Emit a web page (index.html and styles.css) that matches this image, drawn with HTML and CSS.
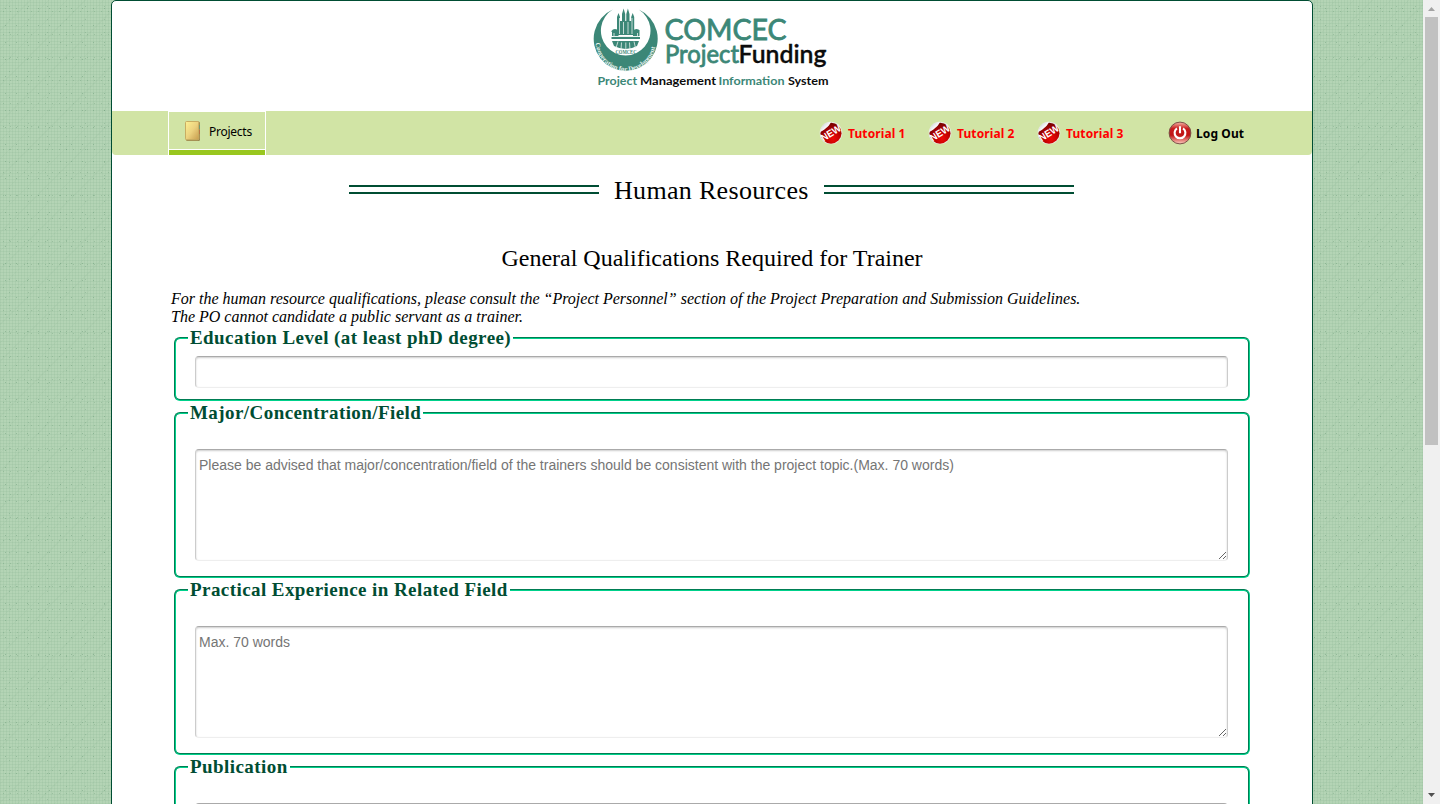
FILE: index.html
```html
<!DOCTYPE html>
<html lang="en">
<head>
<meta charset="utf-8">
<title>COMCEC Project Funding</title>
<link rel="stylesheet" href="styles.css">
</head>
<body>
<svg class="defs" width="0" height="0" aria-hidden="true">
  <defs>
    <radialGradient id="red" cx=".6" cy=".75" r=".8"><stop offset="0" stop-color="#f00808"/><stop offset=".5" stop-color="#b80000"/><stop offset="1" stop-color="#650000"/></radialGradient>
    <linearGradient id="peel" x1="0" y1="0" x2="1" y2="1"><stop offset="0" stop-color="#b8bcc4"/><stop offset=".6" stop-color="#fff"/><stop offset="1" stop-color="#a8a8b0"/></linearGradient>
    <symbol id="new" viewBox="0 0 24 24">
      <circle cx="12" cy="12" r="11.3" fill="#e8eadf"/>
      <circle cx="12" cy="12.2" r="10.5" fill="url(#red)"/>
      <path d="M1 11C2 5 6 1 12 .7C11 4 7 8 1 11Z" fill="url(#peel)"/>
      <text x="12" y="15.4" class="new-text" transform="rotate(-32 12 12)" textLength="22" lengthAdjust="spacingAndGlyphs">NEW</text>
    </symbol>
  </defs>
</svg>
<div class="viewport">
  <div class="page">
    <header class="header">
      <svg class="logo" width="240" height="86" viewBox="592 6 240 86">
        <defs><path id="arc" d="M595.6 41A30.2 30.2 0 0 0 656 41"/></defs>
        <path d="M612.7 9.5A32 32 0 1 0 638.7 9.5A24.8 24.8 0 1 1 612.7 9.5Z" fill="#3c8777"/>
        <text class="motto"><textPath href="#arc" startOffset="2">Cooperation for Development</textPath></text>
        <g fill="#3c8777">
          <path d="M617 35V17L618.5 13L620 17V21H622V14L623.6 8.5L625.2 14V21H626.3V14L627.9 8.5L629.5 14V21H631.2V17L632.7 13L634.2 17V35Z"/>
          <path d="M611.5 31A4 4 0 0 1 618.5 31V36H612V32H611.5ZM633 31A4 4 0 0 1 640 31H639.5V36H633ZM611.5 37H640V39H611.5ZM612 41H639L637 46Q626 52 614 46Z"/>
        </g>
        <path d="M619.5 18V34M623.5 22V34M628 22V34M632 18V34M614 33V36M637.5 33V36M616 48L618 41.5M621 50L621.5 42.5M625.8 50V42.5M630 50L629.5 42.5M635.5 48L634 41.5M613 36.5H639" stroke="#e7f1ee" stroke-width=".8" fill="none"/>
        <text x="615.5" y="54" class="emblem-name" textLength="21" lengthAdjust="spacingAndGlyphs">COMCEC</text>
        <text x="664.5" y="40" class="logo-top" textLength="122" lengthAdjust="spacingAndGlyphs">COMCEC</text>
        <text x="665" y="63" class="logo-mid" textLength="74" lengthAdjust="spacingAndGlyphs">Project</text>
        <text x="738.5" y="63" class="logo-mid dark" textLength="88" lengthAdjust="spacingAndGlyphs">Funding</text>
        <text x="597.5" y="84.7" class="logo-sub" textLength="39.5" lengthAdjust="spacingAndGlyphs">Project</text>
        <text x="640" y="84.7" class="logo-sub dark" textLength="76" lengthAdjust="spacingAndGlyphs">Management</text>
        <text x="718.5" y="84.7" class="logo-sub" textLength="66" lengthAdjust="spacingAndGlyphs">Information</text>
        <text x="788" y="84.7" class="logo-sub dark" textLength="40.5" lengthAdjust="spacingAndGlyphs">System</text>
      </svg>
    </header>
    <nav class="nav">
      <a class="tab">
        <svg width="18" height="22" viewBox="0 0 18 22">
          <defs><linearGradient id="book" x1="0" y1="0" x2="1" y2="1"><stop offset="0" stop-color="#fdf193"/><stop offset=".5" stop-color="#ecd27f"/><stop offset="1" stop-color="#c79c4d"/></linearGradient></defs>
          <rect x="2" y="1.5" width="14" height="19.5" rx="1.5" fill="#97854e"/>
          <path d="M15.5 5V9" stroke="#4f9177"/><path d="M15.5 10V14" stroke="#b35f35"/>
          <rect x="1.5" y="1.5" width="13.3" height="18.3" rx="1" fill="url(#book)" stroke="#c8ad62"/>
        </svg>
        <span>Projects</span>
      </a>
      <div class="links">
        <a class="link"><svg width="24" height="24"><use href="#new"/></svg><span>Tutorial 1</span></a>
        <a class="link"><svg width="24" height="24"><use href="#new"/></svg><span>Tutorial 2</span></a>
        <a class="link"><svg width="24" height="24"><use href="#new"/></svg><span>Tutorial 3</span></a>
        <a class="link logout">
          <svg width="24" height="24" viewBox="0 0 24 24">
            <defs><linearGradient id="power" x1="0" y1="0" x2="0" y2="1"><stop offset="0" stop-color="#f6b9a9"/><stop offset=".3" stop-color="#c81c1c"/><stop offset=".6" stop-color="#c01414"/><stop offset="1" stop-color="#ffd0c2"/></linearGradient></defs>
            <circle cx="12" cy="12" r="10.9" fill="url(#power)" stroke="#7b5047" stroke-width="1"/>
            <path d="M9 7.4A5.4 5.4 0 1 0 15 7.4M12 5.3V12.2" fill="none" stroke="#fff" stroke-width="2.1"/>
          </svg><span>Log Out</span></a>
      </div>
    </nav>
    <main class="main">
      <div class="title"><i class="rule"></i><h1>Human Resources</h1><i class="rule"></i></div>
      <h2>General Qualifications Required for Trainer</h2>
      <p class="note">For the human resource qualifications, please consult the “Project Personnel” section of the Project Preparation and Submission Guidelines.<br>The PO cannot candidate a public servant as a trainer.</p>
      <form>
        <fieldset class="short"><legend>Education Level (at least phD degree)</legend><input class="field" type="text"></fieldset>
        <fieldset><legend>Major/Concentration/Field</legend><textarea class="field area" placeholder="Please be advised that major/concentration/field of the trainers should be consistent with the project topic.(Max. 70 words)"></textarea></fieldset>
        <fieldset><legend>Practical Experience in Related Field</legend><textarea class="field area" placeholder="Max. 70 words"></textarea></fieldset>
        <fieldset><legend>Publication</legend><textarea class="field area"></textarea></fieldset>
      </form>
    </main>
  </div>
</div>
<div class="scrollbar">
  <svg width="17" height="17" viewBox="0 0 17 17"><path d="M5 11L8.5 7L12 11Z" fill="#a3a3a3"/></svg>
  <div class="thumb"></div>
  <svg class="down" width="17" height="17" viewBox="0 0 17 17"><path d="M5 6L8.5 10L12 6Z" fill="#505050"/></svg>
</div>
</body>
</html>
```

FILE: styles.css
```css
* { box-sizing: border-box; }
body {
  margin: 0;
  height: 804px;
  overflow: hidden;
  display: flex;
  font-family: "Liberation Serif", serif;
  color: #000;
}
.defs { position: absolute; }
.viewport {
  flex: 1;
  height: 804px;
  overflow: hidden;
  background-color: #b4d4b5;
  background-image:
    radial-gradient(circle, rgba(95,145,110,.4) 0 .7px, transparent .8px),
    radial-gradient(circle, rgba(95,145,110,.3) 0 .7px, transparent .8px),
    radial-gradient(circle, rgba(95,145,110,.3) 0 .7px, transparent .8px),
    repeating-linear-gradient(135deg, transparent 0 8px, rgba(120,165,130,.07) 8px 9px, transparent 9px 13px),
    repeating-linear-gradient(90deg, rgba(130,175,140,.17) 0 1px, transparent 1px 3px),
    repeating-linear-gradient(0deg, rgba(130,175,140,.17) 0 1px, transparent 1px 3px);
  background-size: 11px 17px, 19px 13px, 7px 23px, auto, auto, auto;
}
.page {
  width: 1202px;
  height: 900px;
  margin-left: 111px;
  background: #fff;
  border: 1px solid #004d33;
  border-radius: 5px;
}
.header { height: 110px; padding: 5px 0 0 480px; }
.logo { display: block; }
.logo text { font-family: Lato, sans-serif; fill: #3c8777; }
.logo .logo-top { font-size: 28px; font-weight: 400; stroke: #3c8777; stroke-width: .8px; }
.logo .logo-mid { font-size: 25px; font-weight: 400; stroke: #3c8777; stroke-width: .8px; }
.logo .logo-sub { font-size: 12px; font-weight: 700; }
.logo .dark { fill: #0c0c0c; }
.logo .logo-mid.dark { font-weight: 600; stroke: #0c0c0c; stroke-width: .3px; }
.logo .motto { font: bold 6.8px "Liberation Serif", serif; fill: #e9f3f0; }
.logo .emblem-name { font: bold 5.5px "Liberation Serif", serif; }
.nav {
  height: 44px;
  display: flex;
  justify-content: space-between;
  padding: 0 66px 0 56px;
  background: #d1e4a5;
  border-radius: 0 0 4px 4px;
}
.tab {
  width: 98px;
  height: 44px;
  display: flex;
  align-items: center;
  gap: 7px;
  padding: 0 0 0 15px;
  border: solid #fff;
  border-width: 1px 1px 0;
  background: linear-gradient(transparent 37px, #fff 37px 38px, #99c71f 38px);
}
.tab svg { margin-top: -5px; }
.tab span { margin-top: -3px; width: 44px; font: 12px/16px "Noto Sans", sans-serif; letter-spacing: -.25px; }
.links { display: flex; align-items: center; }
.link {
  width: 109px;
  display: flex;
  align-items: center;
  gap: 5px;
  color: #f00;
  font: bold 12px/16px "Noto Sans", sans-serif;
  letter-spacing: .1px;
  white-space: nowrap;
}
.link span { margin-top: 2px; }
.logout { width: 78px; margin-left: 22px; color: #000; gap: 4px; }
.new-text { font: bold 10px "Liberation Sans", sans-serif; fill: #fff; text-anchor: middle; }
.main { padding: 0 59px; }
.title { display: flex; justify-content: center; align-items: center; height: 68px; gap: 15px; padding-right: 1px; }
.rule { width: 250px; height: 9px; border: solid #004d33; border-width: 2px 0; }
.title h1 { width: 195px; margin: 4px 0 0; white-space: nowrap; font: 26px/30px "Liberation Serif", serif; letter-spacing: .32px; }
h2 { margin: 20px 0 0; text-align: center; font: 24px/30px "Liberation Serif", serif; }
.note { margin: 17px 0 0; font: italic 16px/18px "Liberation Serif", serif; white-space: nowrap; }
form { padding: 1px 3px 0; }
fieldset {
  height: 176px;
  margin: 0 0 1px;
  padding: 25px 19px 0;
  border: 2px groove #00d18b;
  border-radius: 6px;
}
.short { height: 74px; padding-top: 7px; }
legend { height: 22px; padding: 0 2px; margin-left: -7px; color: #004d33; font: bold 19px/22px "Liberation Serif", serif; letter-spacing: .43px; white-space: nowrap; }
.field {
  display: block;
  width: 1033px;
  height: 32px;
  padding: 7px 3px;
  border: 1px solid;
  border-color: #aaa #ccc #eee;
  border-radius: 4px;
  box-shadow: inset 0 1px 2px rgba(0,0,0,.2);
  font: 14px/16px "Liberation Sans", sans-serif;
  outline: none;
  background: #fff;
}
.area { height: 112px; resize: both; }
.area::placeholder { color: #757575; }
.scrollbar { width: 17px; height: 804px; display: flex; flex-direction: column; background: #f0f0f0; }
.scrollbar svg { display: block; flex: none; }
.thumb { width: 13px; height: 428px; margin-left: 2px; background: #c1c1c1; }
.scrollbar .down { margin-top: auto; }
```
